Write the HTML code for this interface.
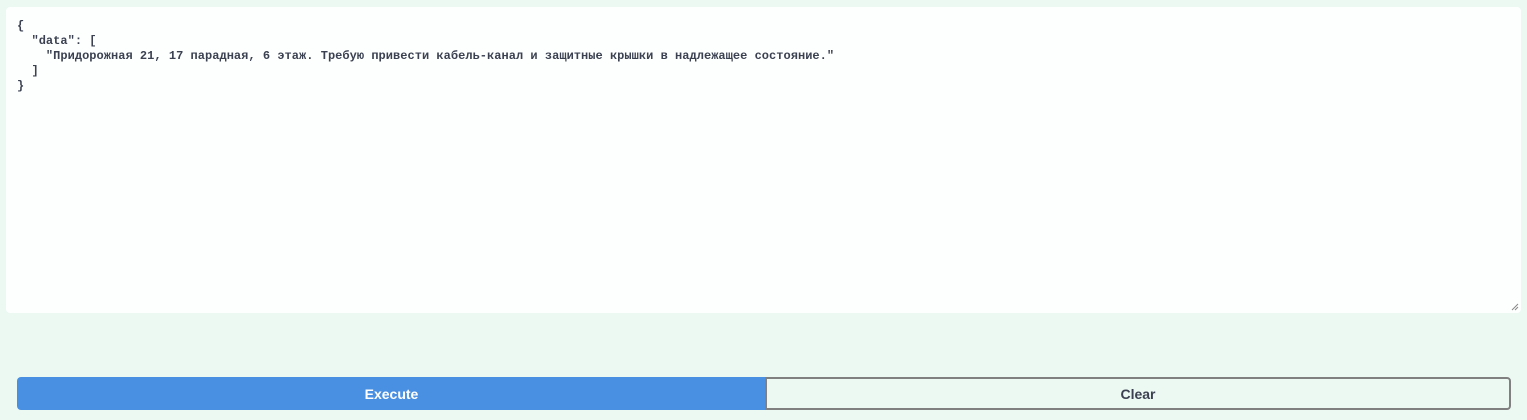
<!DOCTYPE html>
<html><head><meta charset="utf-8"><style>
html,body{margin:0;padding:0;width:1527px;height:420px;background:#ecf8f2;overflow:hidden}
.ta{position:absolute;left:6px;top:7px;width:1515px;height:306px;background:#fdfffe;border-radius:4px;box-sizing:border-box;padding:12px 11px}
pre{margin:0;font-family:"Liberation Mono",monospace;font-weight:bold;font-size:12px;line-height:15px;color:#3b4151;letter-spacing:0.03px}
.grip{position:absolute;right:2px;bottom:2px;width:8px;height:8px}
.btn{position:absolute;top:377px;height:33px;box-sizing:border-box;font-family:"Liberation Sans",sans-serif;font-weight:bold;font-size:14px;display:flex;align-items:center;justify-content:center}
.ex{left:17px;width:749px;background:#4990e2;color:#fff;border-radius:4px 0 0 4px}
.cl{left:765px;width:746px;border:2px solid #808080;border-radius:0 4px 4px 0;color:#3b4151;background:#ecf8f2}
</style></head><body>
<div class="ta"><pre>{
  "data": [
    "Придорожная 21, 17 парадная, 6 этаж. Требую привести кабель-канал и защитные крышки в надлежащее состояние."
  ]
}</pre>
<svg class="grip" viewBox="0 0 8 8"><path d="M7 1L1 7M7 4L4 7" stroke="#888" stroke-width="1"/></svg>
</div>
<div class="btn ex">Execute</div>
<div class="btn cl">Clear</div>
</body></html>
